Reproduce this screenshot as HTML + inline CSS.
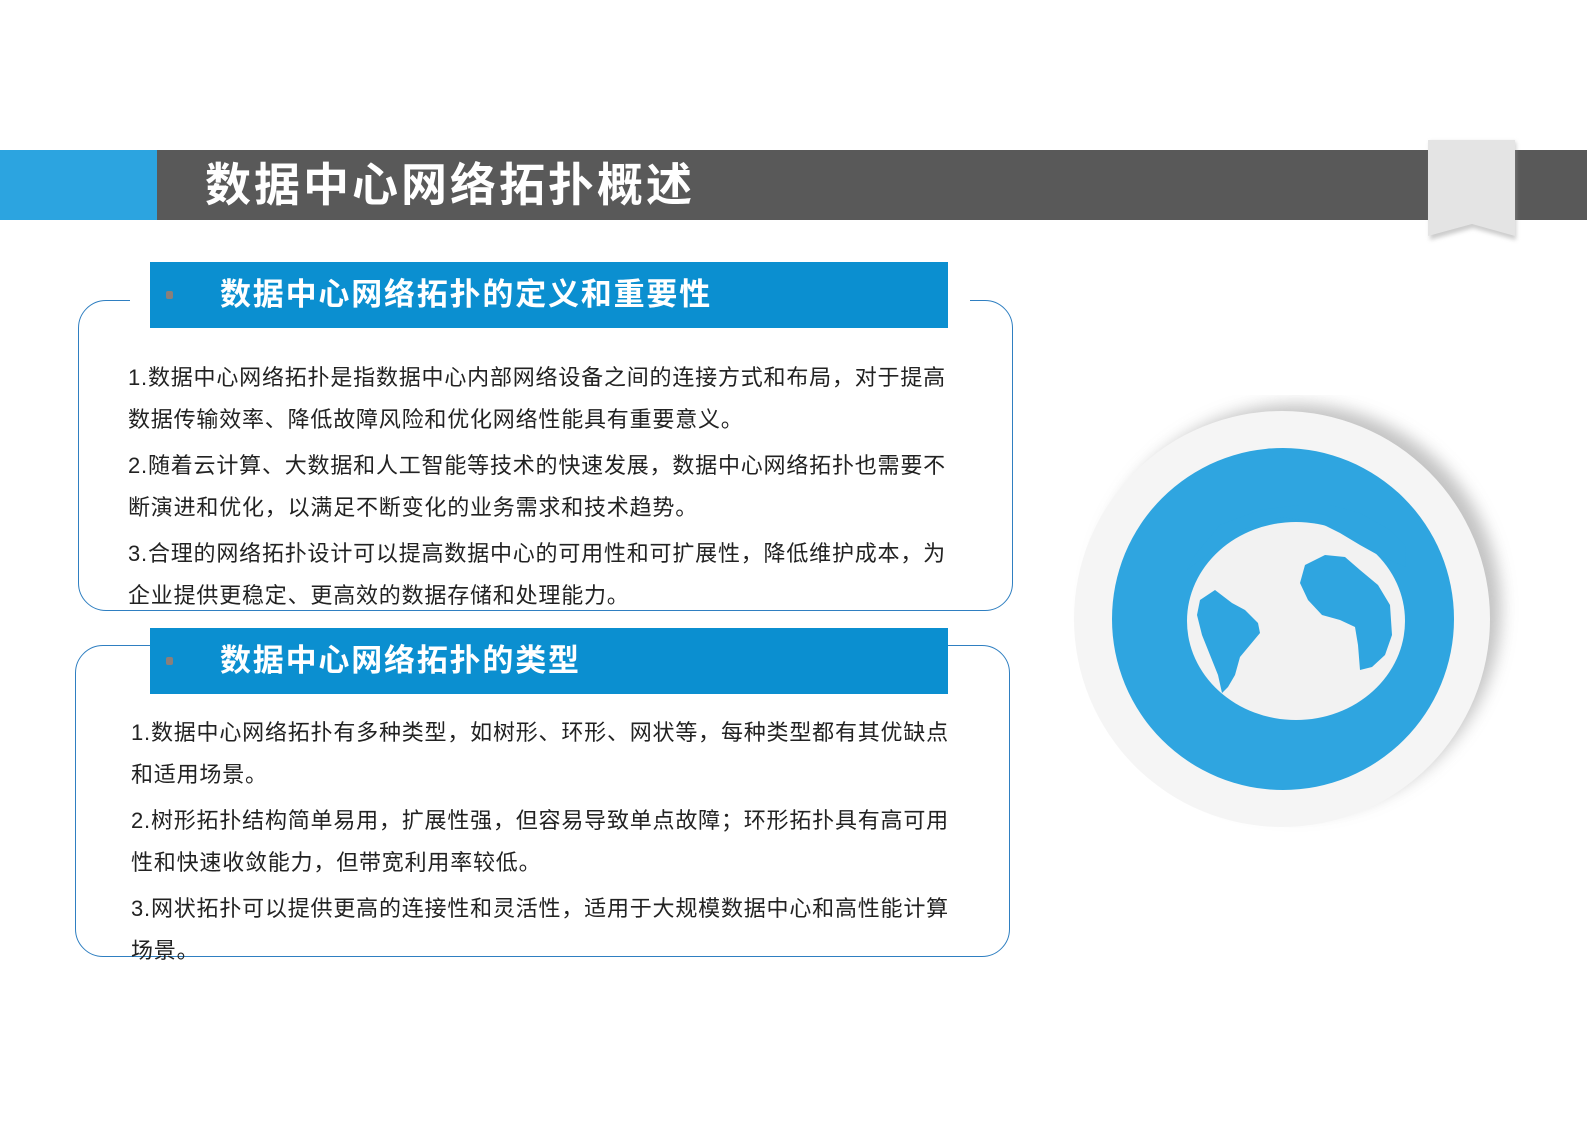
<!DOCTYPE html>
<html><head><meta charset="utf-8"><style>
html,body{margin:0;padding:0;background:#fff;}
body{width:1587px;height:1122px;position:relative;overflow:hidden;font-family:"Liberation Sans","Noto Sans CJK SC",sans-serif;}
.abs{position:absolute;}
.title{left:205px;top:150px;height:70px;line-height:70px;color:#fff;font-size:46px;font-weight:bold;letter-spacing:3px;}
.box{position:absolute;border:1.5px solid #2f7fc1;border-radius:28px;}
.hdr{position:absolute;left:150px;width:798px;height:66px;background:#0b8fd0;color:#fff;font-size:31px;font-weight:bold;line-height:66px;letter-spacing:1.8px;}
.hdr span.t{position:absolute;left:70px;top:0;}
.hdr span.d{position:absolute;left:16px;top:29px;width:7px;height:8px;background:#8a7f7a;border-radius:2px;}
.txt{position:absolute;left:128px;font-size:22px;color:#222;line-height:41.5px;white-space:nowrap;letter-spacing:0.8px;}
.txt p{margin:0 0 5px 0;}
</style></head><body>
<div class="abs" style="left:0;top:150px;width:157px;height:70px;background:#2ca4e0"></div>
<div class="abs" style="left:157px;top:150px;width:1430px;height:70px;background:#595959"></div>
<div class="abs title">数据中心网络拓扑概述</div>
<svg class="abs" style="left:1420px;top:136px" width="105" height="112"><defs><filter id="s"><feGaussianBlur stdDeviation="2"/></filter></defs>
<path d="M10 6 H96 V104 L53 92 L10 104Z" fill="#999" opacity=".5" filter="url(#s)"/>
<path d="M8 4 H95 V100 L52 88 L8 100Z" fill="#e4e4e4"/></svg>

<div class="box" style="left:78px;top:300px;width:933px;height:309px"></div>
<div class="abs" style="left:130px;top:292px;width:840px;height:14px;background:#fff"></div>
<div class="hdr" style="top:262px"><span class="d"></span><span class="t">数据中心网络拓扑的定义和重要性</span></div>
<div class="txt" style="top:357px">
<p>1.数据中心网络拓扑是指数据中心内部网络设备之间的连接方式和布局，对于提高<br>数据传输效率、降低故障风险和优化网络性能具有重要意义。</p>
<p>2.随着云计算、大数据和人工智能等技术的快速发展，数据中心网络拓扑也需要不<br>断演进和优化，以满足不断变化的业务需求和技术趋势。</p>
<p>3.合理的网络拓扑设计可以提高数据中心的可用性和可扩展性，降低维护成本，为<br>企业提供更稳定、更高效的数据存储和处理能力。</p>
</div>

<div class="box" style="left:75px;top:645px;width:933px;height:310px"></div>
<div class="hdr" style="top:628px"><span class="d"></span><span class="t">数据中心网络拓扑的类型</span></div>
<div class="txt" style="top:712px;left:131px">
<p>1.数据中心网络拓扑有多种类型，如树形、环形、网状等，每种类型都有其优缺点<br>和适用场景。</p>
<p>2.树形拓扑结构简单易用，扩展性强，但容易导致单点故障；环形拓扑具有高可用<br>性和快速收敛能力，但带宽利用率较低。</p>
<p>3.网状拓扑可以提供更高的连接性和灵活性，适用于大规模数据中心和高性能计算<br>场景。</p>
</div>

<svg class="abs" style="left:1060px;top:395px" width="460" height="450">
<defs><filter id="b"><feGaussianBlur stdDeviation="8"/></filter></defs>
<circle cx="236" cy="214" r="205" fill="#aaa" filter="url(#b)" opacity=".7"/>
<circle cx="222" cy="224" r="208" fill="#f5f5f5"/>
<circle cx="223" cy="224" r="171" fill="#2fa5e0"/>
<ellipse cx="236" cy="226" rx="109" ry="99" fill="#f2f2f2"/>
<path d="M127 175 L140 165 L160 150 L180 135 L205 128 L222 122 L240 125 L260 128 L280 138 L300 150 L318 160 L346 172 L345 150 L330 135 L300 118 L270 110 L240 110 L200 115 L160 130 L135 160Z" fill="#2fa5e0"/>
<path d="M140 205 L155 195 L172 208 L185 215 L198 228 L200 238 L190 250 L180 262 L175 280 L168 292 L162 298 L158 280 L150 260 L142 240 L137 220Z" fill="#2fa5e0"/>
<path d="M245 170 L265 160 L285 162 L300 175 L318 190 L330 210 L332 240 L325 260 L312 272 L300 275 L298 250 L295 232 L280 225 L262 220 L248 205 L240 188Z" fill="#2fa5e0"/>
</svg>
</body></html>
